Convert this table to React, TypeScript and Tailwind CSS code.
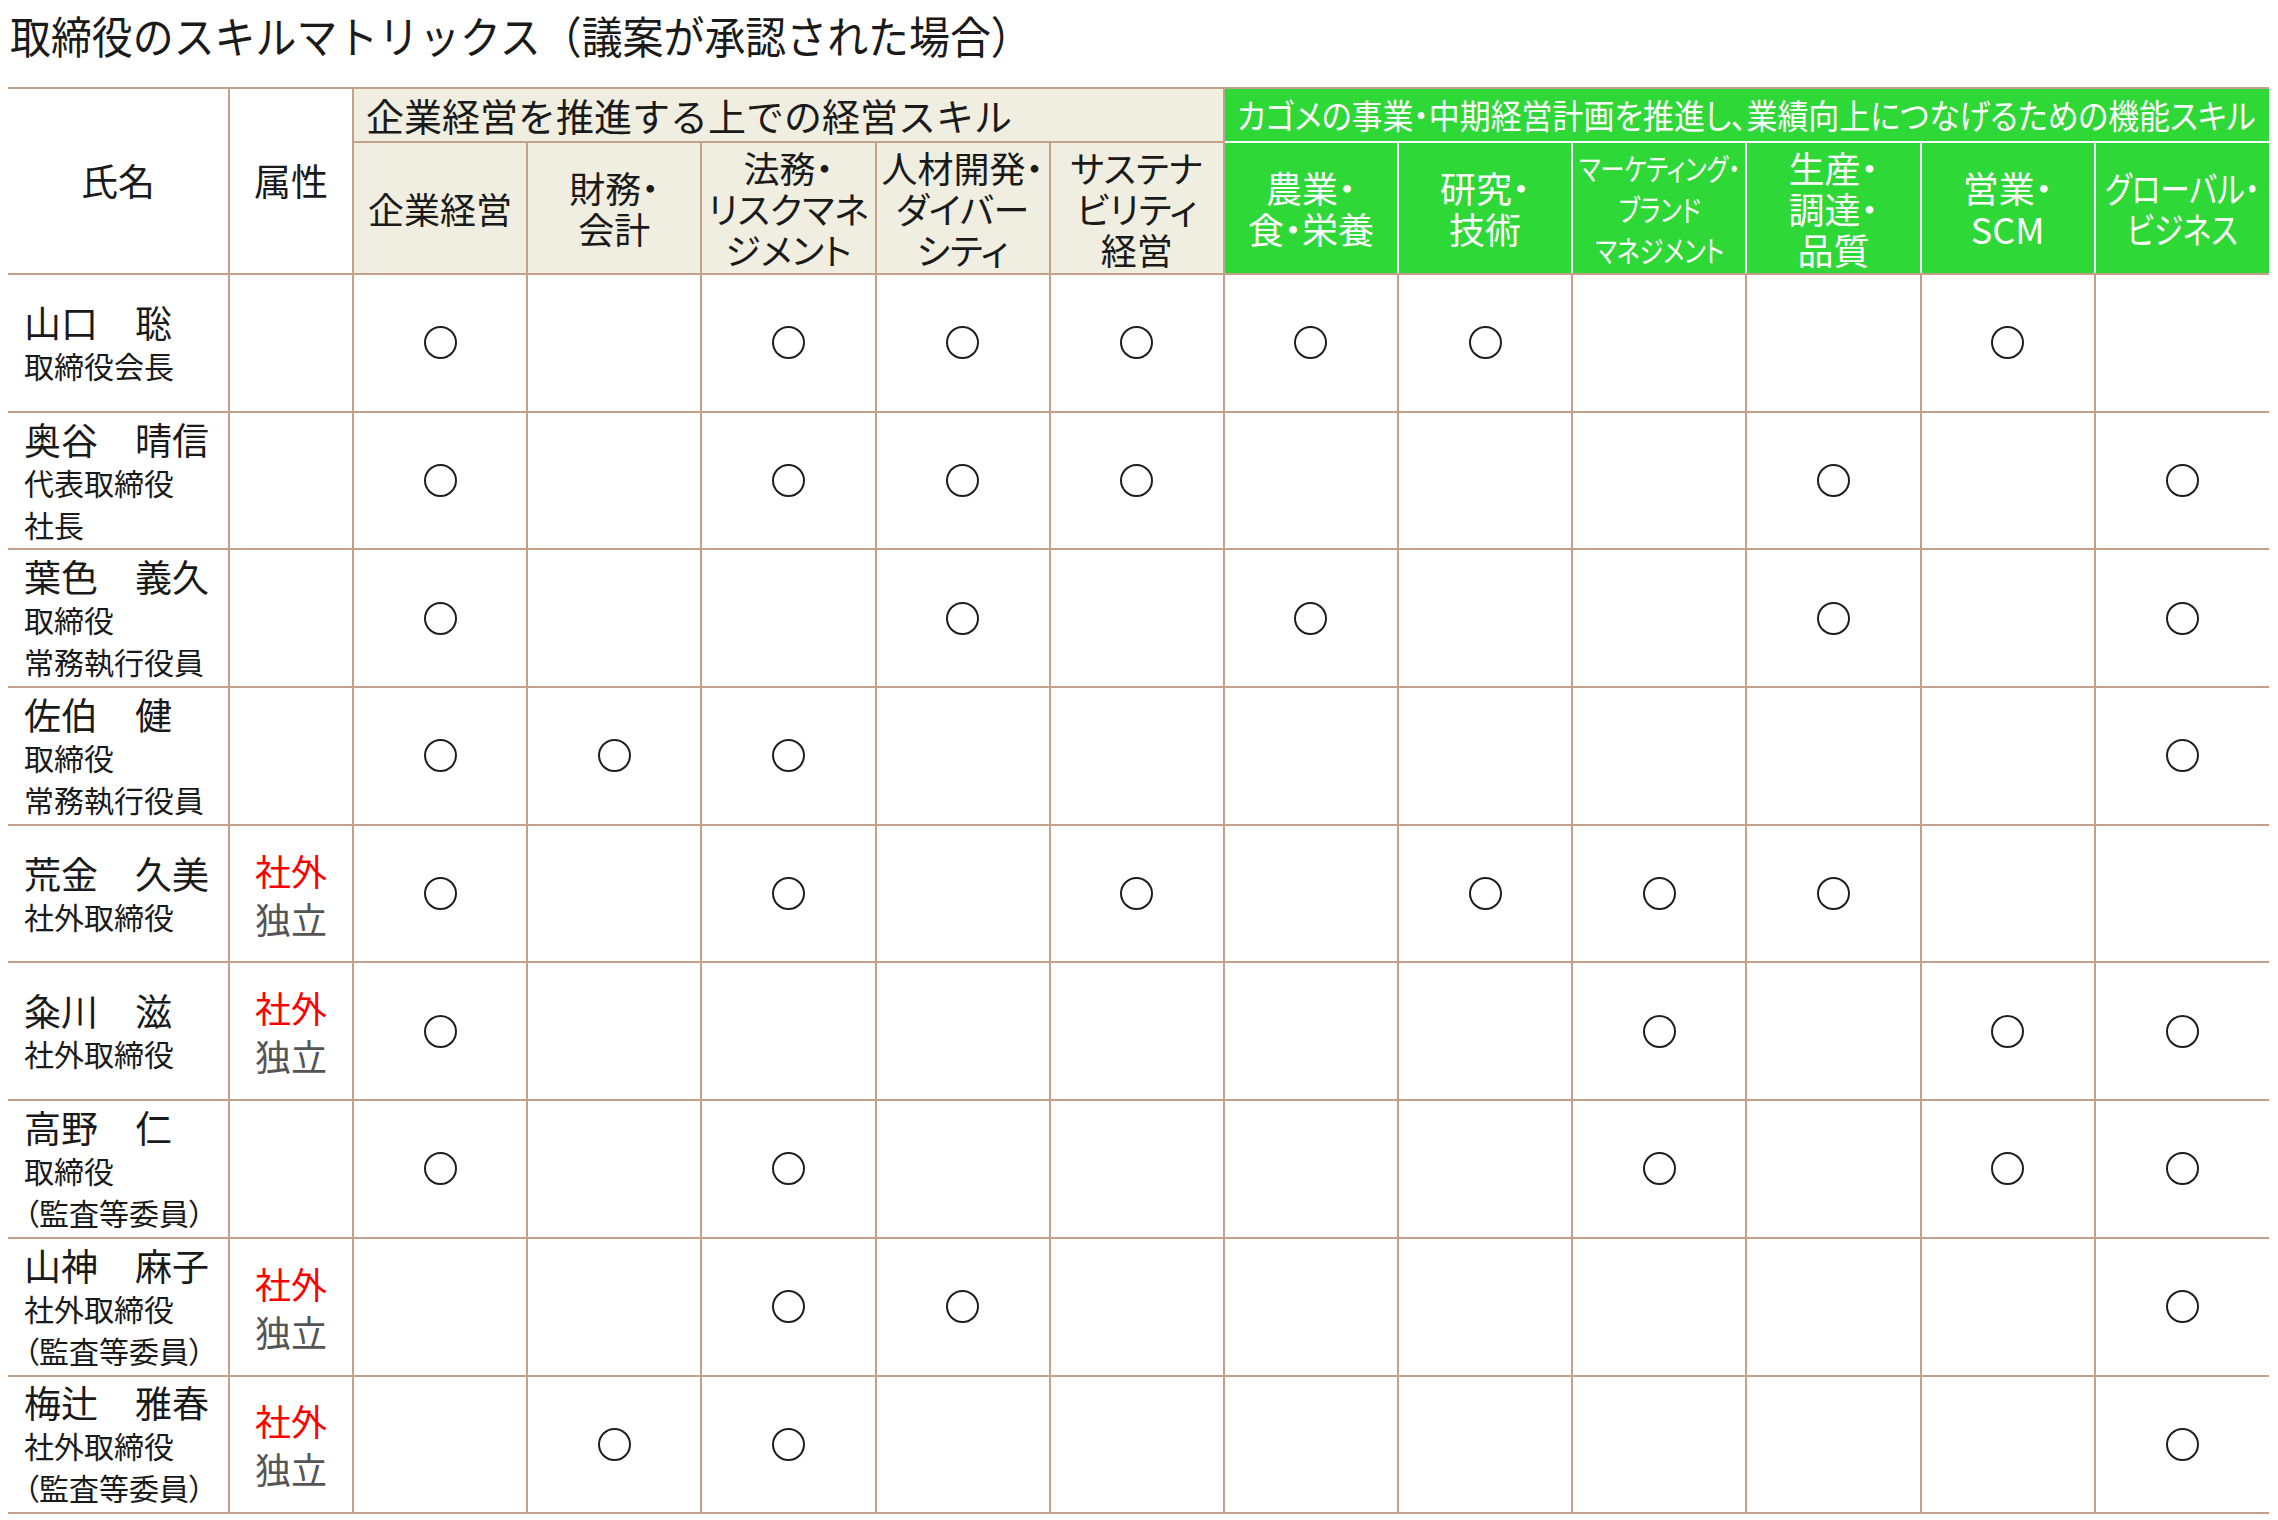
const LINE = "border-[#c3a08a]";

type Director = {
  name: string;
  roles: string[];
  outside?: boolean;
  skills: number[];
};

const DIRECTORS: Director[] = [
  { name: "山口　聡", roles: ["取締役会長"], skills: [0, 2, 3, 4, 5, 6, 9] },
  { name: "奥谷　晴信", roles: ["代表取締役", "社長"], skills: [0, 2, 3, 4, 8, 10] },
  { name: "葉色　義久", roles: ["取締役", "常務執行役員"], skills: [0, 3, 5, 8, 10] },
  { name: "佐伯　健", roles: ["取締役", "常務執行役員"], skills: [0, 1, 2, 10] },
  { name: "荒金　久美", roles: ["社外取締役"], outside: true, skills: [0, 2, 4, 6, 7, 8] },
  { name: "粂川　滋", roles: ["社外取締役"], outside: true, skills: [0, 7, 9, 10] },
  { name: "高野　仁", roles: ["取締役", "（監査等委員）"], skills: [0, 2, 7, 9, 10] },
  { name: "山神　麻子", roles: ["社外取締役", "（監査等委員）"], outside: true, skills: [2, 3, 10] },
  { name: "梅辻　雅春", roles: ["社外取締役", "（監査等委員）"], outside: true, skills: [1, 2, 10] },
];

// management skills (beige) then functional skills (green)
const MGMT: string[][] = [
  ["企業経営"],
  ["財務・", "会計"],
  ["法務・", "リスクマネ", "ジメント"],
  ["人材開発・", "ダイバー", "シティ"],
  ["サステナ", "ビリティ", "経営"],
];

const FUNC: { lines: string[]; narrow?: "mkt" | "global" }[] = [
  { lines: ["農業・", "食・栄養"] },
  { lines: ["研究・", "技術"] },
  { lines: ["マーケティング・", "ブランド", "マネジメント"], narrow: "mkt" },
  { lines: ["生産・", "調達・", "品質"] },
  { lines: ["営業・", "SCM"] },
  { lines: ["グローバル・", "ビジネス"], narrow: "global" },
];

function Circle() {
  return <div className="mx-auto h-[33px] w-[33px] rounded-full border-2 border-[#1e1e1e]" />;
}

export default function App() {
  return (
    <div className="min-h-screen bg-white font-['Noto_Sans_CJK_JP','Noto_Sans',sans-serif] text-[#1a1a1a]">
      <div className="h-[87px] overflow-hidden pl-[10px] pt-[7px]">
        <h1 className="origin-left scale-x-[0.93] text-[44px] leading-[56px] font-normal whitespace-nowrap">
          取締役のスキルマトリックス（議案が承認された場合）
        </h1>
      </div>

      <table className="ml-[8px] w-[2261px] table-fixed border-collapse">
        <colgroup>
          <col className="w-[221px]" />
          <col className="w-[124px]" />
          {Array.from({ length: 11 }).map((_, i) => (
            <col key={i} />
          ))}
        </colgroup>
        <thead>
          <tr className="h-[54px]">
            <th
              rowSpan={2}
              className={`border-t-2 border-r-2 border-b-2 ${LINE} text-center align-middle text-[37px] font-normal`}
            >
              氏名
            </th>
            <th
              rowSpan={2}
              className={`border-t-2 border-r-2 border-b-2 ${LINE} text-center align-middle text-[37px] font-normal`}
            >
              属性
            </th>
            <th
              colSpan={5}
              className={`border-t-2 border-r-2 border-b-2 ${LINE} bg-[#f0eee0] pl-[12px] text-left align-middle text-[38px] leading-[50px] font-normal whitespace-nowrap`}
            >
              企業経営を推進する上での経営スキル
            </th>
            <th
              colSpan={6}
              className={`overflow-hidden border-t-2 border-b-2 ${LINE} border-b-white bg-[#2ed837] px-[12px] text-left align-middle font-normal text-white`}
            >
              <div className="origin-left scale-x-[0.91] text-[34px] leading-[50px] whitespace-nowrap [font-feature-settings:'palt']">
                カゴメの事業・中期経営計画を推進し、業績向上につなげるための機能スキル
              </div>
            </th>
          </tr>
          <tr className="h-[132px]">
            {MGMT.map((lines, i) => (
              <th
                key={i}
                className={`border-r-2 border-b-2 ${LINE} bg-[#f0eee0] align-middle text-[36px] leading-[41px] font-normal whitespace-nowrap [font-feature-settings:'palt']`}
              >
                <div className="flex flex-col items-center">
                  {lines.map((l) => (
                    <div key={l}>{l}</div>
                  ))}
                </div>
              </th>
            ))}
            {FUNC.map((f, i) => (
              <th
                key={i}
                className={`border-b-2 ${LINE} ${
                  i < FUNC.length - 1 ? "border-r-2 border-r-white" : ""
                } bg-[#2ed837] align-middle font-normal text-white whitespace-nowrap [font-feature-settings:'palt'] ${
                  f.narrow === "mkt" ? "text-[30px] leading-[41px]" : "text-[36px] leading-[41px]"
                }`}
              >
                <div className="flex justify-center">
                  <div
                    className={`flex flex-col items-center ${
                      f.narrow === "mkt"
                        ? "scale-x-[0.8]"
                        : f.narrow === "global"
                          ? "scale-x-[0.82]"
                          : ""
                    }`}
                  >
                    {f.lines.map((l) => (
                      <div key={l}>{l}</div>
                    ))}
                  </div>
                </div>
              </th>
            ))}
          </tr>
        </thead>
        <tbody>
          {DIRECTORS.map((d) => (
            <tr key={d.name} className="h-[137.7px]">
              <td className={`border-r-2 border-b-2 ${LINE} pl-[16px] align-middle whitespace-nowrap`}>
                <div className="text-[37px] leading-[44px]">{d.name}</div>
                {d.roles.map((r) => (
                  <div key={r} className="text-[30px] leading-[42px] [font-feature-settings:'palt']">
                    {r}
                  </div>
                ))}
              </td>
              <td className={`border-r-2 border-b-2 ${LINE} text-center align-middle`}>
                {d.outside && (
                  <>
                    <div className="text-[36px] leading-[48px] text-[#ff0000]">社外</div>
                    <div className="text-[36px] leading-[48px] text-[#555555]">独立</div>
                  </>
                )}
              </td>
              {Array.from({ length: 11 }).map((_, i) => (
                <td
                  key={i}
                  className={`border-b-2 ${LINE} ${i < 10 ? "border-r-2" : ""} align-middle`}
                >
                  {d.skills.includes(i) && <Circle />}
                </td>
              ))}
            </tr>
          ))}
        </tbody>
      </table>
    </div>
  );
}
